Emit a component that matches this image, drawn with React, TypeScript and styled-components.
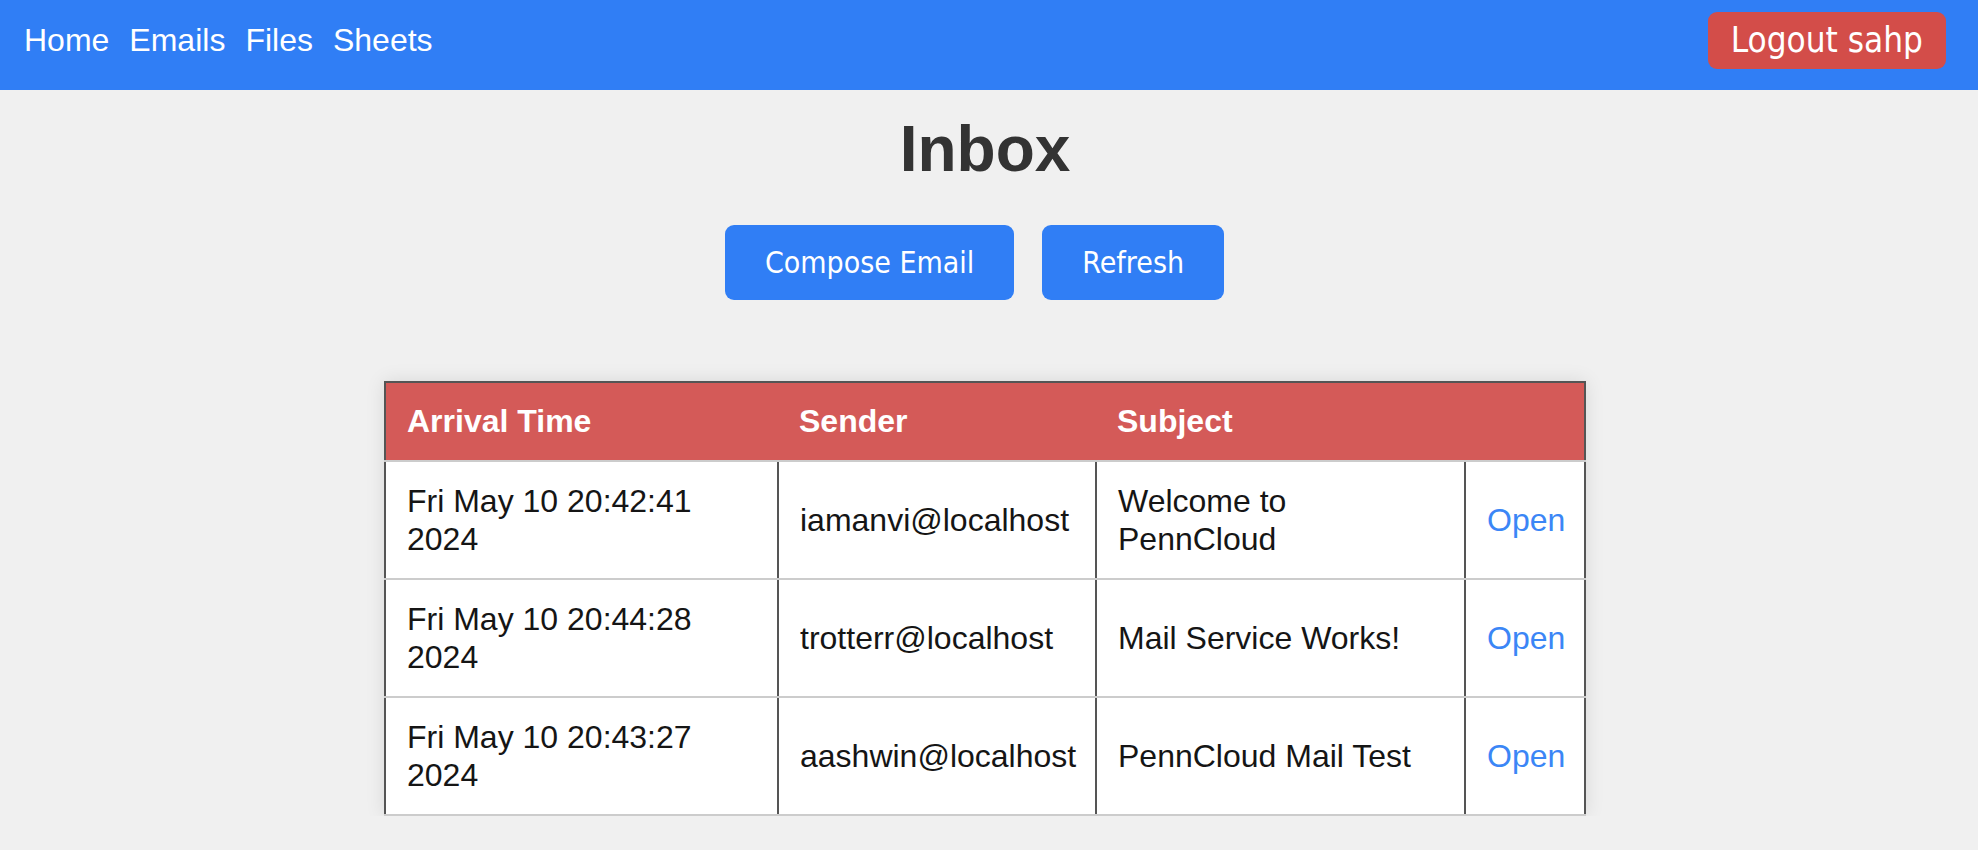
import React from "react";
import styled, { createGlobalStyle } from "styled-components";

const GlobalStyle = createGlobalStyle`
  html, body {
    margin: 0;
    padding: 0;
    background: #f0f0f0;
    font-family: "Liberation Sans", Arial, sans-serif;
  }
`;

const NavBar = styled.nav`
  display: flex;
  align-items: center;
  justify-content: space-between;
  background: #307ef5;
  height: 90px;
  box-sizing: border-box;
  padding: 0 32px 9px 24px;
`;

const NavLinks = styled.div`
  display: flex;
  gap: 20px;
`;

const NavLink = styled.a`
  color: #ffffff;
  font-family: "Liberation Sans", Arial, sans-serif;
  font-size: 32px;
  line-height: 37px;
  text-decoration: none;
  cursor: pointer;
`;

const Button = styled.button<{ $variant?: "primary" | "danger"; $size?: "nav" | "action" }>`
  border: none;
  cursor: pointer;
  color: #ffffff;
  font-family: "DejaVu Sans Condensed", "DejaVu Sans", sans-serif;
  font-stretch: condensed;
  background: ${(p) => (p.$variant === "danger" ? "#d34d49" : "#307ef5")};
  font-size: ${(p) => (p.$size === "nav" ? "34.8px" : "30px")};
  line-height: ${(p) => (p.$size === "nav" ? "41px" : "35px")};
  padding: ${(p) => (p.$size === "nav" ? "8px 23px" : "20px 40px")};
  border-radius: 9px;
`;

const Main = styled.main`
  display: flex;
  flex-direction: column;
  align-items: center;
  padding-right: 8px;
`;

const Title = styled.h1`
  margin: 22px 0 39px;
  font-family: "Liberation Sans", Arial, sans-serif;
  font-weight: 700;
  font-size: 64px;
  line-height: 74px;
  color: #333333;
`;

const ActionRow = styled.div`
  display: flex;
  gap: 28px;
  padding-right: 21px;
`;

const Table = styled.table`
  margin-top: 81px;
  width: 1200px;
  table-layout: fixed;
  border-collapse: collapse;
  border: 2px solid #555555;
  background: #ffffff;
  box-shadow: 0 0 18px rgba(0, 0, 0, 0.1);
  font-family: "Liberation Sans", Arial, sans-serif;
  font-size: 32px;
`;

const HeadCell = styled.th`
  background: #d45a58;
  color: #ffffff;
  font-weight: 700;
  text-align: left;
  padding: 20px 20px 20px 21px;
  line-height: 36.5px;
  border-bottom: 2px solid #cccccc;
`;

const Cell = styled.td<{ $nowrap?: boolean }>`
  color: #151515;
  padding: 20px 20px 20px 21px;
  line-height: 38px;
  vertical-align: middle;
  border-left: 2px solid #555555;
  border-right: 2px solid #555555;
  border-top: 2px solid #cccccc;
  border-bottom: 2px solid #cccccc;
  white-space: ${(p) => (p.$nowrap ? "nowrap" : "normal")};
  overflow: visible;
`;

const OpenLink = styled.a`
  color: #3b86f6;
  text-decoration: none;
  cursor: pointer;
`;

const emails = [
  { time: "Fri May 10 20:42:41 2024", sender: "iamanvi@localhost", subject: "Welcome to PennCloud" },
  { time: "Fri May 10 20:44:28 2024", sender: "trotterr@localhost", subject: "Mail Service Works!" },
  { time: "Fri May 10 20:43:27 2024", sender: "aashwin@localhost", subject: "PennCloud Mail Test" },
];

export default function App() {
  return (
    <>
      <GlobalStyle />
      <NavBar>
        <NavLinks>
          <NavLink>Home</NavLink>
          <NavLink>Emails</NavLink>
          <NavLink>Files</NavLink>
          <NavLink>Sheets</NavLink>
        </NavLinks>
        <Button $variant="danger" $size="nav">Logout sahp</Button>
      </NavBar>
      <Main>
        <Title>Inbox</Title>
        <ActionRow>
          <Button $size="action">Compose Email</Button>
          <Button $size="action">Refresh</Button>
        </ActionRow>
        <Table>
          <colgroup>
            <col style={{ width: 393 }} />
            <col style={{ width: 318 }} />
            <col style={{ width: 369 }} />
            <col style={{ width: 120 }} />
          </colgroup>
          <thead>
            <tr>
              <HeadCell>Arrival Time</HeadCell>
              <HeadCell>Sender</HeadCell>
              <HeadCell>Subject</HeadCell>
              <HeadCell></HeadCell>
            </tr>
          </thead>
          <tbody>
            {emails.map((e) => (
              <tr key={e.time}>
                <Cell>{e.time}</Cell>
                <Cell $nowrap>{e.sender}</Cell>
                <Cell>{e.subject}</Cell>
                <Cell $nowrap>
                  <OpenLink>Open</OpenLink>
                </Cell>
              </tr>
            ))}
          </tbody>
        </Table>
      </Main>
    </>
  );
}
